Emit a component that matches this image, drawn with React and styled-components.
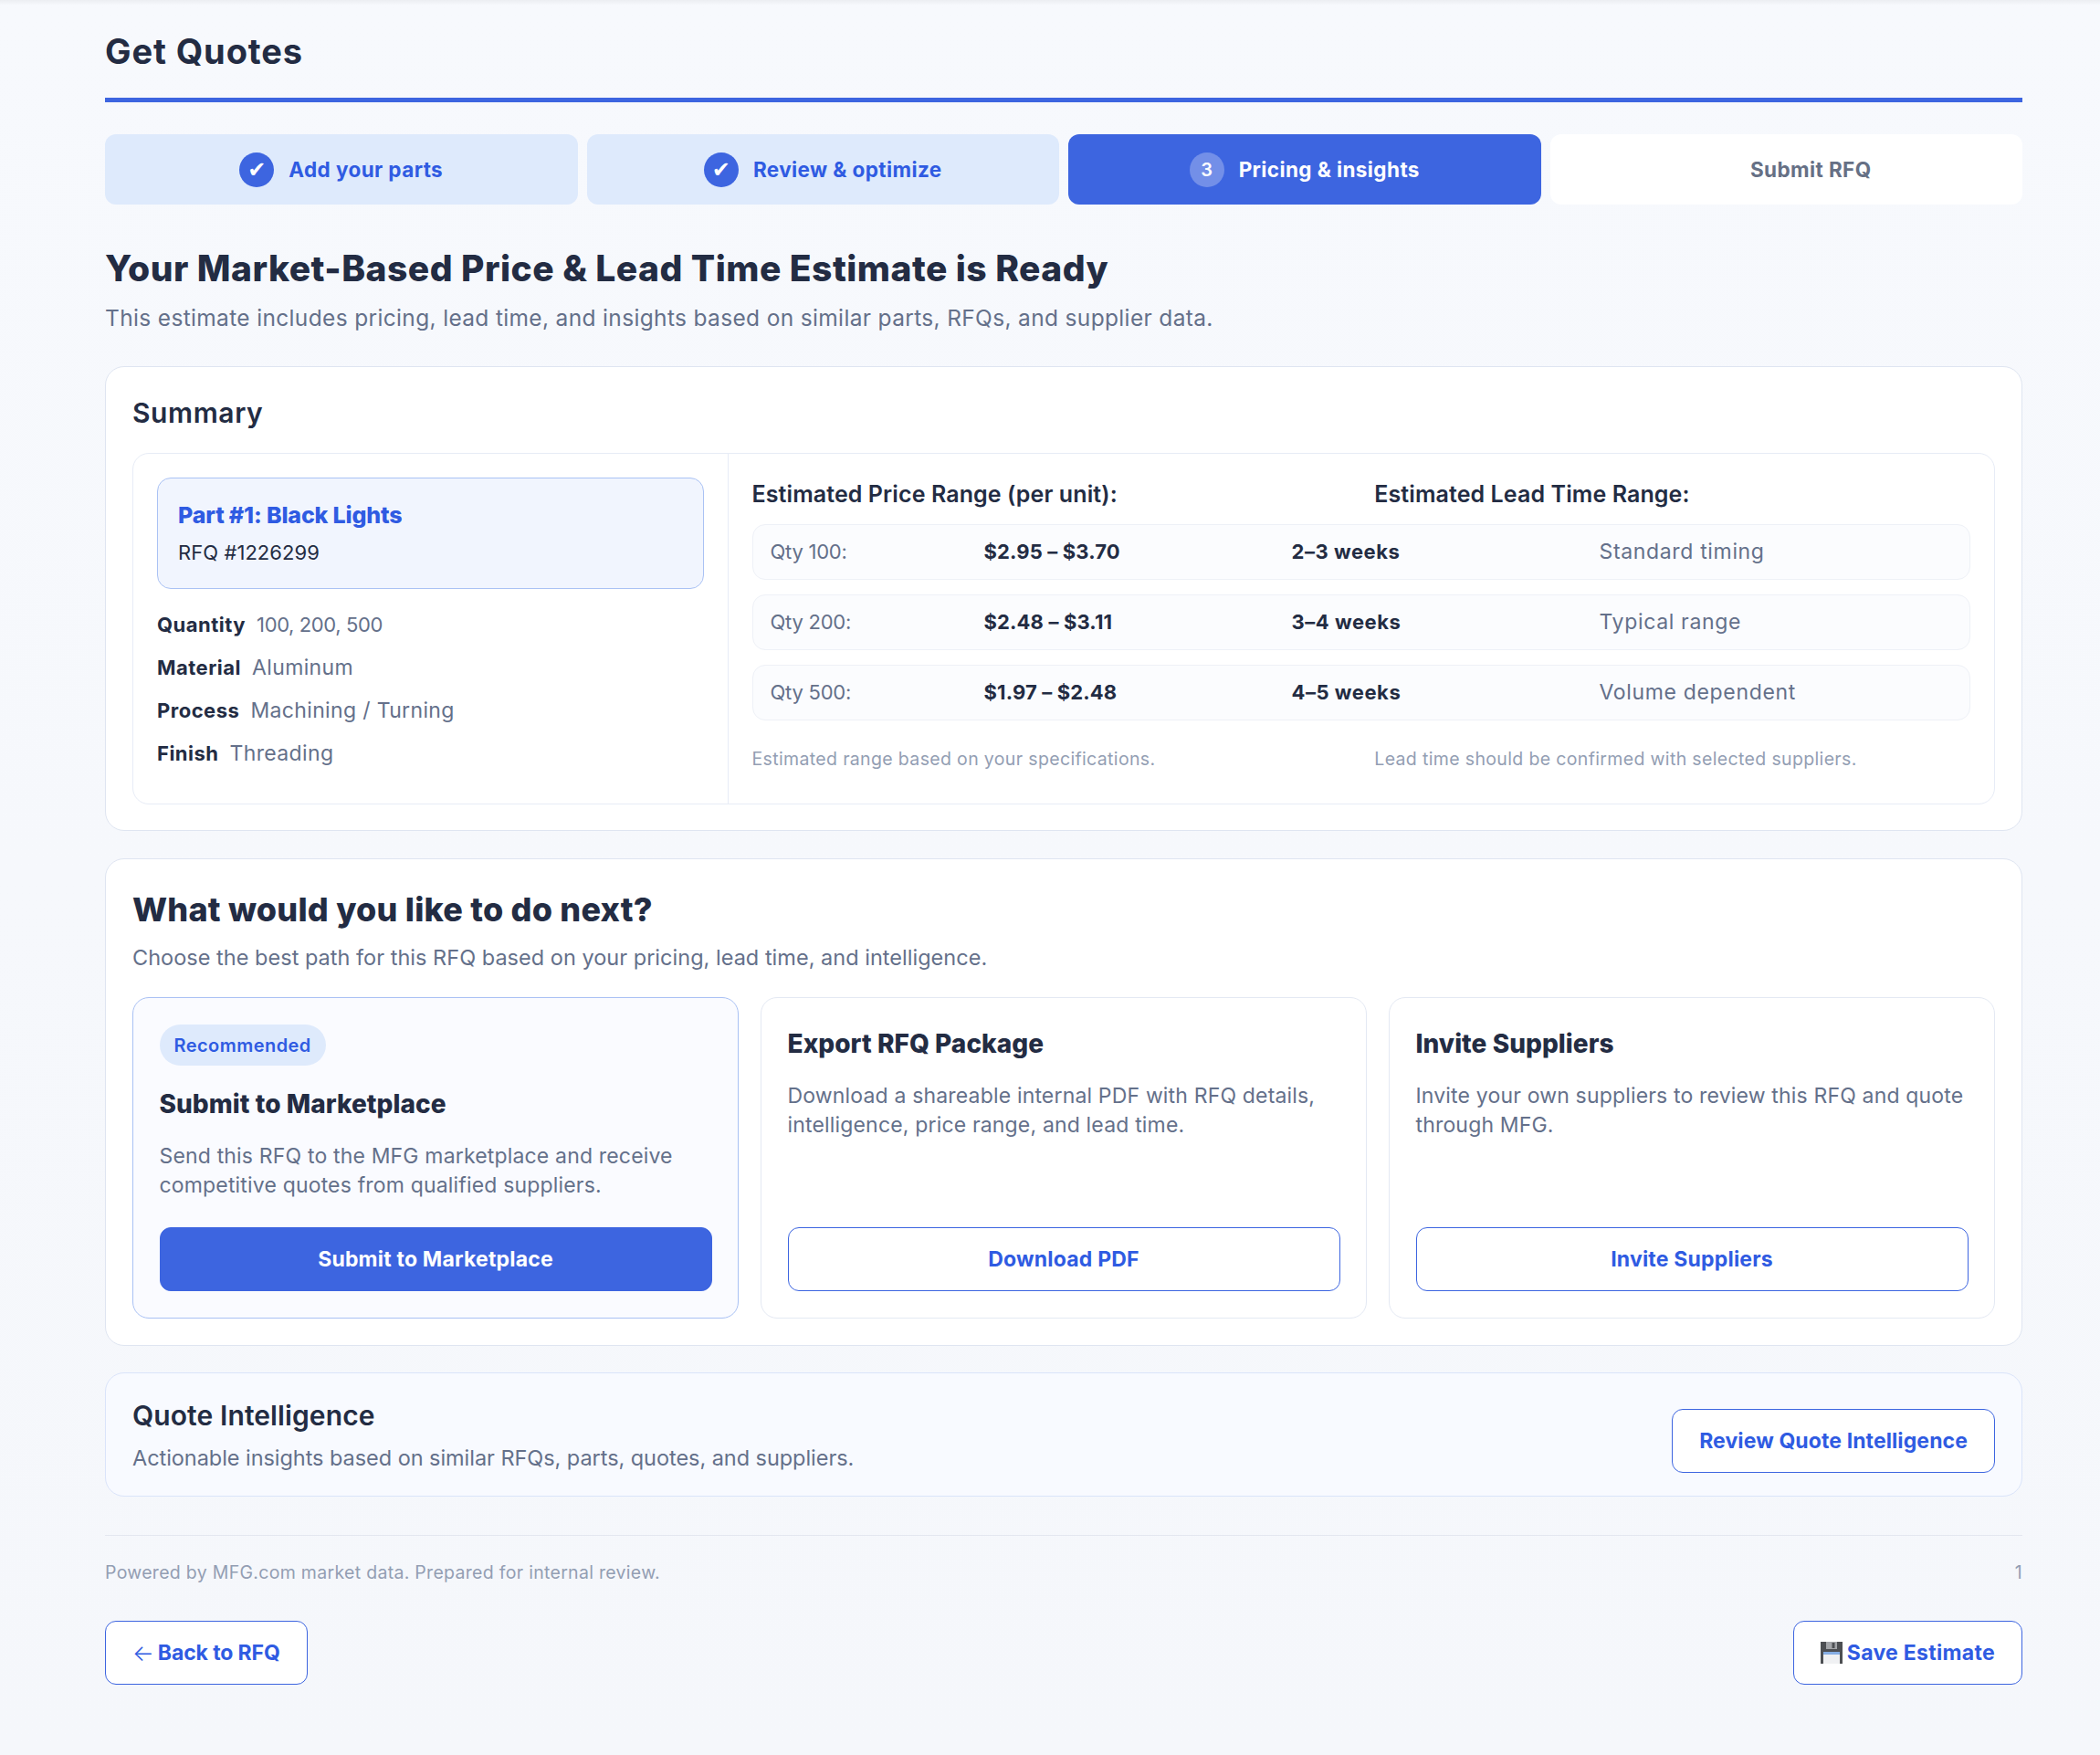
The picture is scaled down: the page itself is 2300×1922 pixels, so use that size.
import React from 'react';
import styled, { createGlobalStyle } from 'styled-components';

const Global = createGlobalStyle`
  * { box-sizing: border-box; }
  html, body { margin: 0; padding: 0; }
  body {
    background: #f6f8fc;
    font-family: Inter, "Noto Sans", "Liberation Sans", sans-serif;
    color: #232c43;
  }
`;

const blue = '#3d65e0';
const ink = '#232c43';
const link = '#2f5be2';
const grey = '#64708a';
const faint = '#939eb3';

const Page = styled.div`
  min-height: 1922px;
  padding: 0 85px 77px 115px;
  background:
    linear-gradient(#eceef2, rgba(246, 248, 252, 0) 6px) no-repeat,
    linear-gradient(#f7f9fd, #f5f7fb);
`;
const Header = styled.header`
  height: 112px;
  padding-top: 28px;
  border-bottom: 5px solid ${blue};
`;
const Title = styled.h1`
  margin: 0;
  font-size: 38px;
  line-height: 56px;
  font-weight: 700;
  letter-spacing: 0.9px;
  color: ${ink};
`;
const Steps = styled.ol`
  list-style: none;
  margin: 35px 0 0;
  padding: 0;
  display: grid;
  grid-template-columns: repeat(4, 1fr);
  gap: 10px;
`;
const stepBg = { done: '#deeafc', active: blue, todo: '#ffffff' };
const stepFg = { done: link, active: '#ffffff', todo: '#667085' };
const Step = styled.li`
  height: 77px;
  border-radius: 12px;
  display: flex;
  align-items: center;
  justify-content: center;
  gap: 16px;
  font-size: 22.5px;
  font-weight: 650;
  letter-spacing: 0.4px;
  background: ${p => stepBg[p.$state]};
  color: ${p => stepFg[p.$state]};
`;
const Bubble = styled.span`
  width: 38px;
  height: 38px;
  border-radius: 50%;
  display: flex;
  align-items: center;
  justify-content: center;
  letter-spacing: 0;
  color: #fff;
  font-size: ${p => (p.$done ? '24px' : '20px')};
  font-family: ${p => (p.$done ? '"DejaVu Sans", sans-serif' : 'inherit')};
  font-weight: ${p => (p.$done ? 400 : 600)};
  background: ${p => (p.$done ? blue : 'rgba(255,255,255,0.28)')};
  visibility: ${p => (p.$blank ? 'hidden' : 'visible')};
`;
const Lead = styled.h2`
  margin: 45px 0 0;
  font-size: 39px;
  line-height: 50px;
  font-weight: 800;
  letter-spacing: 0.48px;
`;
const LeadSub = styled.p`
  margin: 12px 0 36px;
  font-size: 24.5px;
  line-height: 34px;
  letter-spacing: 0.34px;
  color: ${grey};
`;
const Card = styled.section`
  background: #fff;
  border: 1.5px solid #dfe5f1;
  border-radius: 21px;
  padding: 30px 29px 29px;
  margin-bottom: 29.5px;
`;
const SummaryCard = styled(Card)`
  padding-bottom: 28px;
  margin-bottom: 30px;
`;
const CardTitle = styled.h3`
  margin: 0 0 24px;
  font-size: 30px;
  line-height: 40px;
  font-weight: 600;
  letter-spacing: 0.6px;
`;
const SummaryBody = styled.div`
  display: grid;
  grid-template-columns: 652px 1fr;
  height: 385px;
  border: 1.5px solid #e7ecf6;
  border-radius: 18px;
`;
const SummaryLeft = styled.div`
  padding: 26px;
  border-right: 1.5px solid #e7ecf6;
`;
const PartBox = styled.div`
  height: 122px;
  padding: 0 22px;
  background: #f1f5fe;
  border: 1.5px solid #aac2f4;
  border-radius: 15px;
  display: flex;
  flex-direction: column;
  justify-content: center;
  gap: 9px;
`;
const PartName = styled.div`
  font-size: 25px;
  line-height: 32px;
  font-weight: 800;
  letter-spacing: -0.15px;
  color: ${link};
`;
const PartRfq = styled.div`
  font-size: 22px;
  line-height: 32px;
  letter-spacing: 0.06px;
  color: ${ink};
`;
const Details = styled.dl`
  margin: 15.5px 0 0;
`;
const Detail = styled.div`
  height: 47px;
  display: flex;
  align-items: center;
  gap: 12px;
  font-size: 22px;
`;
const Term = styled.dt`
  font-weight: 650;
  letter-spacing: 0.5px;
`;
const Def = styled.dd`
  margin: 0;
  color: ${grey};
  font-size: ${p => (p.$num ? '22px' : '23px')};
  letter-spacing: ${p => (p.$num ? '-0.38px' : '0.35px')};
`;
const SummaryRight = styled.div`
  padding: 26px 26px 26px 25.5px;
`;
const Pair = styled.div`
  display: grid;
  grid-template-columns: 1fr 1fr;
  gap: 29px;
`;
const RangeTitle = styled.div`
  font-size: 25px;
  line-height: 36px;
  font-weight: 600;
  letter-spacing: 0.1px;
`;
const Rows = styled.div`
  margin-top: 15px;
  display: flex;
  flex-direction: column;
  gap: 16px;
`;
const Row = styled.div`
  height: 61px;
  padding: 0 19px 2px;
  display: grid;
  grid-template-columns: 234px 337px 337px 1fr;
  align-items: center;
  background: #fbfcfe;
  border: 1.5px solid #eef1f7;
  border-radius: 14px;
  font-size: 22px;
`;
const Qty = styled.span`
  color: ${grey};
  letter-spacing: -0.25px;
`;
const Price = styled.span`
  font-weight: 650;
  letter-spacing: 0.15px;
`;
const Weeks = styled.span`
  font-weight: 650;
  letter-spacing: 0.55px;
`;
const RowNote = styled.span`
  font-size: 23px;
  color: ${grey};
  letter-spacing: 0.66px;
`;
const Footnotes = styled(Pair)`
  margin-top: 28px;
`;
const Footnote = styled.div`
  font-size: 19.5px;
  line-height: 28px;
  letter-spacing: 0.35px;
  color: ${faint};
`;
const NextTitle = styled.h3`
  margin: 0 0 11px;
  font-size: 36px;
  line-height: 50px;
  font-weight: 800;
  letter-spacing: 0.23px;
`;
const Muted = styled.p`
  margin: 0;
  font-size: 23.5px;
  line-height: 34px;
  letter-spacing: ${p => (p.$snug ? '-0.05px' : '0.02px')};
  color: ${grey};
`;
const Options = styled.div`
  margin-top: 25.5px;
  display: grid;
  grid-template-columns: repeat(3, 1fr);
  gap: 24px;
`;
const Option = styled.article`
  height: 352px;
  padding: 29.5px 28.5px 28.5px;
  display: flex;
  flex-direction: column;
  align-items: flex-start;
  border-radius: 18px;
  border: 1.5px solid ${p => (p.$featured ? '#a9c1f4' : '#e4e9f3')};
  background: ${p => (p.$featured ? '#fafbff' : '#ffffff')};
`;
const Badge = styled.span`
  height: 45px;
  padding: 0 16px;
  display: inline-flex;
  align-items: center;
  border-radius: 23px;
  margin-bottom: 21px;
  background: #deeafc;
  color: ${link};
  font-size: 20px;
  font-weight: 600;
  letter-spacing: 0.45px;
`;
const OptionTitle = styled.h4`
  margin: 2px 0 21.5px;
  font-size: 28px;
  line-height: 38px;
  font-weight: 800;
  letter-spacing: 0.05px;
`;
const OptionText = styled.p`
  margin: 0;
  font-size: 23px;
  line-height: 32.5px;
  letter-spacing: 0.17px;
  color: ${grey};
`;
const Button = styled.button`
  height: 70px;
  padding: 0 29px;
  display: inline-flex;
  align-items: center;
  justify-content: center;
  border-radius: 12px;
  border: 1.5px solid ${blue};
  background: ${p => (p.$primary ? blue : '#fff')};
  color: ${p => (p.$primary ? '#fff' : link)};
  font-family: inherit;
  font-size: 23px;
  font-weight: 650;
  letter-spacing: 0.2px;
`;
const WideButton = styled(Button)`
  width: 100%;
  margin-top: auto;
`;
const IntelButton = styled(Button)`
  margin-top: 12px;
  letter-spacing: 0.1px;
`;
const BackButton = styled(Button)`
  letter-spacing: -0.1px;
`;
const SaveButton = styled(Button)`
  letter-spacing: 0.3px;
`;
const Intel = styled.section`
  height: 136px;
  padding: 2px 29px 0;
  display: flex;
  align-items: center;
  justify-content: space-between;
  background: #f8faff;
  border: 1.5px solid #dae4fa;
  border-radius: 21px;
`;
const IntelTitle = styled.h3`
  margin: 0 0 10px;
  font-size: 30px;
  line-height: 40px;
  font-weight: 600;
  letter-spacing: 0.1px;
`;
const Foot = styled.footer`
  margin-top: 42px;
  padding-top: 23px;
  border-top: 1.5px solid #e3e7f0;
  display: flex;
  justify-content: space-between;
  font-size: 19.5px;
  line-height: 34px;
  letter-spacing: 0.3px;
  color: ${faint};
`;
const Actions = styled.div`
  margin-top: 36px;
  display: flex;
  justify-content: space-between;
`;
const Arrow = styled.span`
  font-size: 25px;
  font-weight: 300;
  margin-right: 4px;
  line-height: 1;
`;
const Disk = styled.svg`
  width: 24px;
  height: 24px;
  margin-right: 5px;
`;

const steps = [
  { state: 'done', mark: '✔', label: 'Add your parts' },
  { state: 'done', mark: '✔', label: 'Review & optimize' },
  { state: 'active', mark: '3', label: 'Pricing & insights' },
  { state: 'todo', label: 'Submit RFQ' },
];
const specs = [
  ['Quantity', '100, 200, 500', true],
  ['Material', 'Aluminum'],
  ['Process', 'Machining / Turning'],
  ['Finish', 'Threading'],
];
const ranges = [
  ['Qty 100:', '$2.95 – $3.70', '2–3 weeks', 'Standard timing'],
  ['Qty 200:', '$2.48 – $3.11', '3–4 weeks', 'Typical range'],
  ['Qty 500:', '$1.97 – $2.48', '4–5 weeks', 'Volume dependent'],
];

export default function App() {
  return (
    <Page>
      <Global />
      <Header><Title>Get Quotes</Title></Header>
      <Steps>
        {steps.map(s => (
          <Step key={s.label} $state={s.state}>
            <Bubble $done={s.state === 'done'} $blank={!s.mark}>{s.mark}</Bubble>
            {s.label}
          </Step>
        ))}
      </Steps>
      <Lead>Your Market-Based Price &amp; Lead Time Estimate is Ready</Lead>
      <LeadSub>This estimate includes pricing, lead time, and insights based on similar parts, RFQs, and supplier data.</LeadSub>

      <SummaryCard>
        <CardTitle>Summary</CardTitle>
        <SummaryBody>
          <SummaryLeft>
            <PartBox>
              <PartName>Part #1: Black Lights</PartName>
              <PartRfq>RFQ #1226299</PartRfq>
            </PartBox>
            <Details>
              {specs.map(([k, v, num]) => (
                <Detail key={k}><Term>{k}</Term><Def $num={num}>{v}</Def></Detail>
              ))}
            </Details>
          </SummaryLeft>
          <SummaryRight>
            <Pair>
              <RangeTitle>Estimated Price Range (per unit):</RangeTitle>
              <RangeTitle>Estimated Lead Time Range:</RangeTitle>
            </Pair>
            <Rows>
              {ranges.map(r => (
                <Row key={r[0]}>
                  <Qty>{r[0]}</Qty><Price>{r[1]}</Price><Weeks>{r[2]}</Weeks><RowNote>{r[3]}</RowNote>
                </Row>
              ))}
            </Rows>
            <Footnotes>
              <Footnote>Estimated range based on your specifications.</Footnote>
              <Footnote>Lead time should be confirmed with selected suppliers.</Footnote>
            </Footnotes>
          </SummaryRight>
        </SummaryBody>
      </SummaryCard>

      <Card>
        <NextTitle>What would you like to do next?</NextTitle>
        <Muted>Choose the best path for this RFQ based on your pricing, lead time, and intelligence.</Muted>
        <Options>
          <Option $featured>
            <Badge>Recommended</Badge>
            <OptionTitle>Submit to Marketplace</OptionTitle>
            <OptionText>Send this RFQ to the MFG marketplace and receive competitive quotes from qualified suppliers.</OptionText>
            <WideButton $primary>Submit to Marketplace</WideButton>
          </Option>
          <Option>
            <OptionTitle>Export RFQ Package</OptionTitle>
            <OptionText>Download a shareable internal PDF with RFQ details, intelligence, price range, and lead time.</OptionText>
            <WideButton>Download PDF</WideButton>
          </Option>
          <Option>
            <OptionTitle>Invite Suppliers</OptionTitle>
            <OptionText>Invite your own suppliers to review this RFQ and quote through MFG.</OptionText>
            <WideButton>Invite Suppliers</WideButton>
          </Option>
        </Options>
      </Card>

      <Intel>
        <div>
          <IntelTitle>Quote Intelligence</IntelTitle>
          <Muted $snug>Actionable insights based on similar RFQs, parts, quotes, and suppliers.</Muted>
        </div>
        <IntelButton>Review Quote Intelligence</IntelButton>
      </Intel>

      <Foot>
        <span>Powered by MFG.com market data. Prepared for internal review.</span>
        <span>1</span>
      </Foot>
      <Actions>
        <BackButton><Arrow>←</Arrow>Back to RFQ</BackButton>
        <SaveButton>
          <Disk viewBox="0 0 24 24">
            <path d="M0 0h24v24H0z" fill="#4d4f53" />
            <path d="M6 0h12v8H6z" fill="#a3a5a9" />
            <path d="M12.5 1h3v6h-3z" fill="#4d4f53" />
            <path d="M3 11h18v13H3z" fill="#f0f1f3" />
            <path d="M3 11h18v3H3z" fill="#86aee4" />
          </Disk>
          Save Estimate
        </SaveButton>
      </Actions>
    </Page>
  );
}
